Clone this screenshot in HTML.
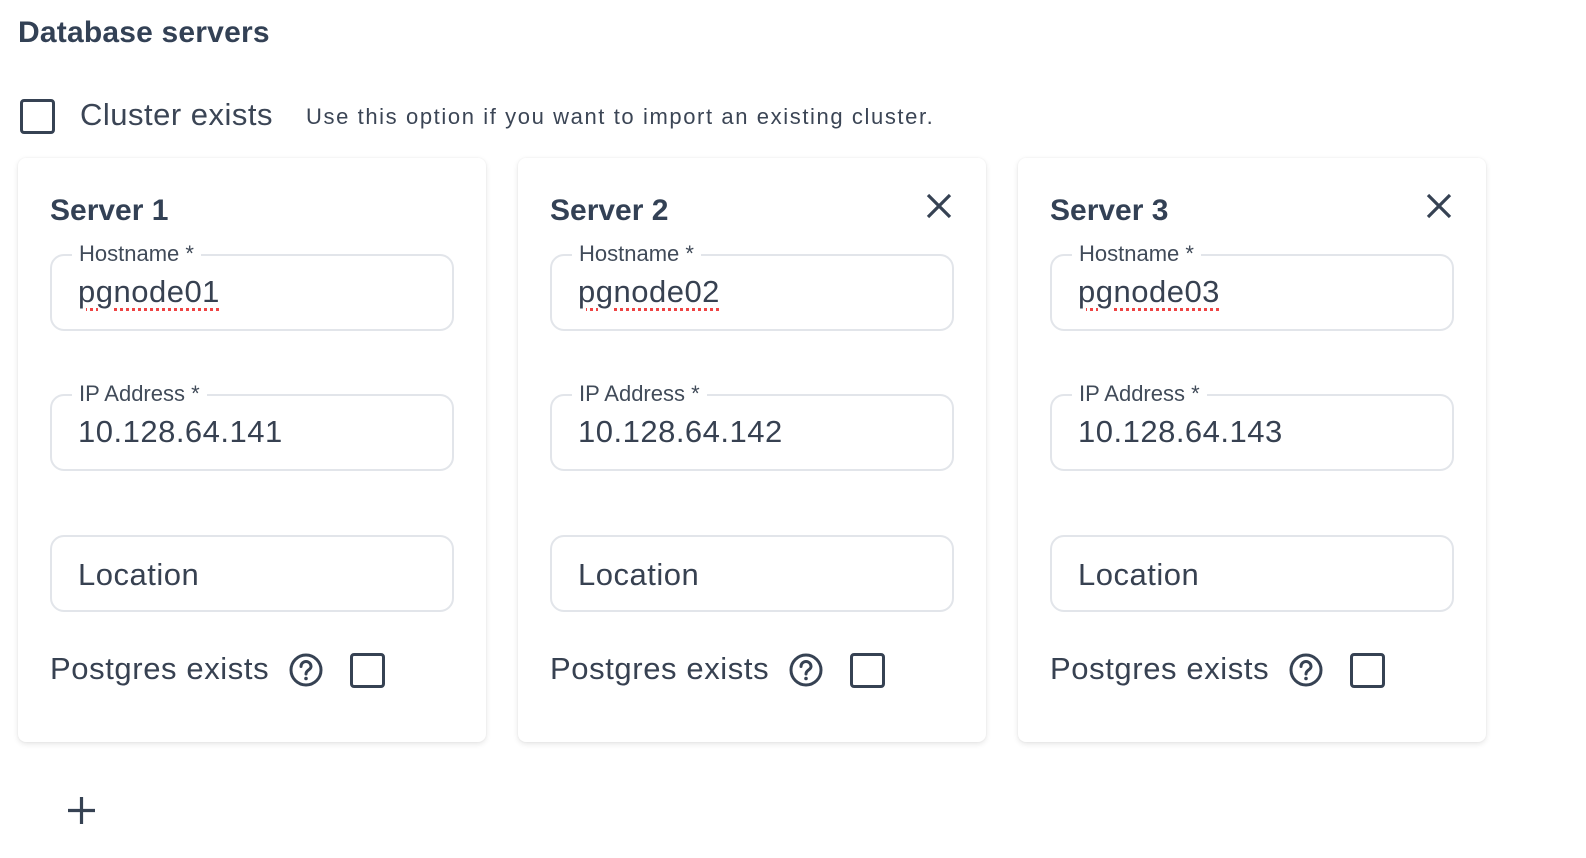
<!DOCTYPE html>
<html><head><meta charset="utf-8"><style>
*{box-sizing:border-box;margin:0;padding:0}
body{width:1586px;height:858px;background:#fff;font-family:"Liberation Sans",sans-serif;color:#374151;position:relative;overflow:hidden}
.abs{position:absolute}
h1{position:absolute;left:18px;top:16px;font-size:30px;font-weight:bold;color:#334155;white-space:nowrap;letter-spacing:.2px}
.cb{position:absolute;width:35px;height:35px;border:3.5px solid #364253;border-radius:4px}
.card{position:absolute;top:158px;width:468px;height:584px;background:#fff;border-radius:8px;box-shadow:0 2px 6px rgba(0,0,0,.1),0 0 2px rgba(0,0,0,.06)}
.title{position:absolute;left:32px;top:36px;font-size:30px;font-weight:bold;color:#334155}
.field{position:absolute;left:32px;width:404px;height:77px;border:2px solid #e2e5ea;border-radius:14px}
.lbl{position:absolute;left:20px;top:-16px;background:#fff;padding:0 7px;font-size:22px;color:#414b59;line-height:28px;white-space:nowrap}
.val{position:absolute;left:26px;top:18px;font-size:31px;color:#374151;white-space:nowrap;letter-spacing:.5px}
.sp{text-decoration:underline dotted #ef4444;text-underline-offset:6px;text-decoration-thickness:3px}
.pg{position:absolute;left:32px;top:493px;font-size:31px;color:#374151;white-space:nowrap;letter-spacing:.6px}
</style></head><body>
<h1>Database servers</h1>
<div class="cb" style="left:20px;top:99px"></div>
<div class="abs" style="left:80px;top:97px;font-size:31px;color:#3b4555;letter-spacing:.5px">Cluster exists</div>
<div class="abs" style="left:306px;top:104px;font-size:22px;color:#3b4555;letter-spacing:1.6px">Use this option if you want to import an existing cluster.</div>

<div class="card" style="left:18px">
<div class="title">Server 1</div>
<div class="field" style="top:96px"><div class="lbl">Hostname *</div><div class="val"><span class="sp">pgnode01</span></div></div>
<div class="field" style="top:236px"><div class="lbl">IP Address *</div><div class="val">10.128.64.141</div></div>
<div class="field" style="top:377px"><div class="val" style="top:20px">Location</div></div>
<div class="pg">Postgres exists</div>
<svg class="abs" style="left:271px;top:495px" width="34" height="34" viewBox="0 0 34 34"><circle cx="17" cy="17" r="15" fill="none" stroke="#364253" stroke-width="3"/><path d="M12 13.5a5 5 0 0 1 10 0c0 3.5-5 3.5-5 7.5" fill="none" stroke="#364253" stroke-width="3" stroke-linecap="round"/><circle cx="17" cy="25.5" r="1.8" fill="#364253"/></svg>
<div class="cb" style="left:332px;top:495px"></div>
</div>

<div class="card" style="left:518px">
<div class="title">Server 2</div>
<svg class="abs" style="left:408px;top:35px" width="26" height="26" viewBox="0 0 26 26"><path d="M2 2L24 24M24 2L2 24" stroke="#364253" stroke-width="3.2"/></svg>
<div class="field" style="top:96px"><div class="lbl">Hostname *</div><div class="val"><span class="sp">pgnode02</span></div></div>
<div class="field" style="top:236px"><div class="lbl">IP Address *</div><div class="val">10.128.64.142</div></div>
<div class="field" style="top:377px"><div class="val" style="top:20px">Location</div></div>
<div class="pg">Postgres exists</div>
<svg class="abs" style="left:271px;top:495px" width="34" height="34" viewBox="0 0 34 34"><circle cx="17" cy="17" r="15" fill="none" stroke="#364253" stroke-width="3"/><path d="M12 13.5a5 5 0 0 1 10 0c0 3.5-5 3.5-5 7.5" fill="none" stroke="#364253" stroke-width="3" stroke-linecap="round"/><circle cx="17" cy="25.5" r="1.8" fill="#364253"/></svg>
<div class="cb" style="left:332px;top:495px"></div>
</div>

<div class="card" style="left:1018px">
<div class="title">Server 3</div>
<svg class="abs" style="left:408px;top:35px" width="26" height="26" viewBox="0 0 26 26"><path d="M2 2L24 24M24 2L2 24" stroke="#364253" stroke-width="3.2"/></svg>
<div class="field" style="top:96px"><div class="lbl">Hostname *</div><div class="val"><span class="sp">pgnode03</span></div></div>
<div class="field" style="top:236px"><div class="lbl">IP Address *</div><div class="val">10.128.64.143</div></div>
<div class="field" style="top:377px"><div class="val" style="top:20px">Location</div></div>
<div class="pg">Postgres exists</div>
<svg class="abs" style="left:271px;top:495px" width="34" height="34" viewBox="0 0 34 34"><circle cx="17" cy="17" r="15" fill="none" stroke="#364253" stroke-width="3"/><path d="M12 13.5a5 5 0 0 1 10 0c0 3.5-5 3.5-5 7.5" fill="none" stroke="#364253" stroke-width="3" stroke-linecap="round"/><circle cx="17" cy="25.5" r="1.8" fill="#364253"/></svg>
<div class="cb" style="left:332px;top:495px"></div>
</div>

<svg class="abs" style="left:67px;top:796px" width="29" height="29" viewBox="0 0 29 29"><path d="M14.5 1V28M1 14.5H28" stroke="#364253" stroke-width="3.2"/></svg>
</body></html>
